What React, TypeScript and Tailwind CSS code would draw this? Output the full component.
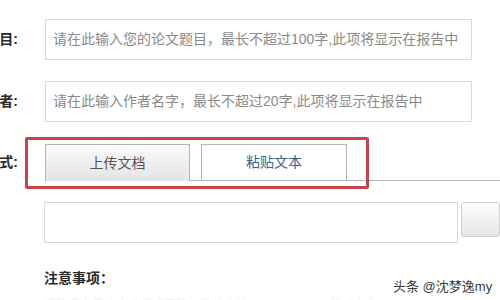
export default function App() {
  const font = { fontFamily: '"Liberation Sans", "Noto Sans CJK SC", sans-serif' };
  return (
    <div className="relative w-[500px] h-[300px] overflow-hidden bg-white text-[14px]" style={font}>
      {/* 论文题目 */}
      <div className="flex items-center pt-[19px]">
        <div className="w-[45px] flex">
          <div className="w-[18px] flex justify-end whitespace-nowrap font-bold text-[#2a2a2a]">论文题目:</div>
        </div>
        <div className="w-[427px] h-[41px] border border-[#d9d9d9] flex items-center pl-[7px] text-[#8a8a8a] whitespace-nowrap">
          请在此输入您的论文题目，最长不超过100字,此项将显示在报告中
        </div>
      </div>

      {/* 作者 */}
      <div className="flex items-center mt-[21px]">
        <div className="w-[45px] flex">
          <div className="w-[18px] flex justify-end whitespace-nowrap font-bold text-[#2a2a2a]">作者:</div>
        </div>
        <div className="w-[427px] h-[41px] border border-[#d9d9d9] flex items-center pl-[7px] text-[#8a8a8a] whitespace-nowrap">
          请在此输入作者名字，最长不超过20字,此项将显示在报告中
        </div>
      </div>

      {/* 上传方式 tabs */}
      <div className="flex items-end mt-[22px]">
        <div className="w-[45px] flex self-center">
          <div className="w-[18px] flex justify-end whitespace-nowrap font-bold text-[#2a2a2a]">上传方式:</div>
        </div>
        <div className="w-[145px] h-[37px] border border-b-0 border-[#b4b4b4] bg-gradient-to-b from-[#fbfbfb] to-[#e4e4e4] flex items-center justify-center text-[#555]">
          上传文档
        </div>
        <div className="flex-1 flex items-end border-b border-[#b4b4b4] pl-[11px]">
          <div className="w-[146px] h-[36px] border border-b-0 border-[#b4b4b4] bg-white flex items-center justify-center text-[#3d5f8e]">
            粘贴文本
          </div>
        </div>
      </div>

      {/* file input row */}
      <div className="flex items-start mt-[21px]">
        <div className="w-[45px]" />
        <div className="w-[427px] h-[41px] border border-[#d9d9d9]" />
        <div className="ml-[3px] w-[40px] h-[35px] border border-[#cfcfcf] rounded-[3px] bg-gradient-to-b from-[#fdfdfd] to-[#e6e6e6]" />
      </div>

      {/* notes */}
      <div className="pl-[44px] mt-[25px] font-bold text-[#2a2a2a] leading-[20px]">注意事项：</div>
      <div className="pl-[44px] mt-[8px] text-[12px] text-[#f2f2f2] whitespace-nowrap">
        请确保上传的文档格式正确，系统支持doc、docx、txt格式文件
      </div>

      {/* annotation */}
      <div className="absolute left-[25px] top-[137px] w-[344px] h-[52px] border-[3px] border-[#c8434c] rounded-[2px]" />

      {/* watermark */}
      <div
        className="absolute left-[393px] top-[277px] text-[13px] text-[#3a3a3a] whitespace-nowrap"
        style={{ textShadow: "0 0 2px #fff, 0 0 2px #fff" }}
      >
        头条 @沈梦逸my
      </div>
    </div>
  );
}
